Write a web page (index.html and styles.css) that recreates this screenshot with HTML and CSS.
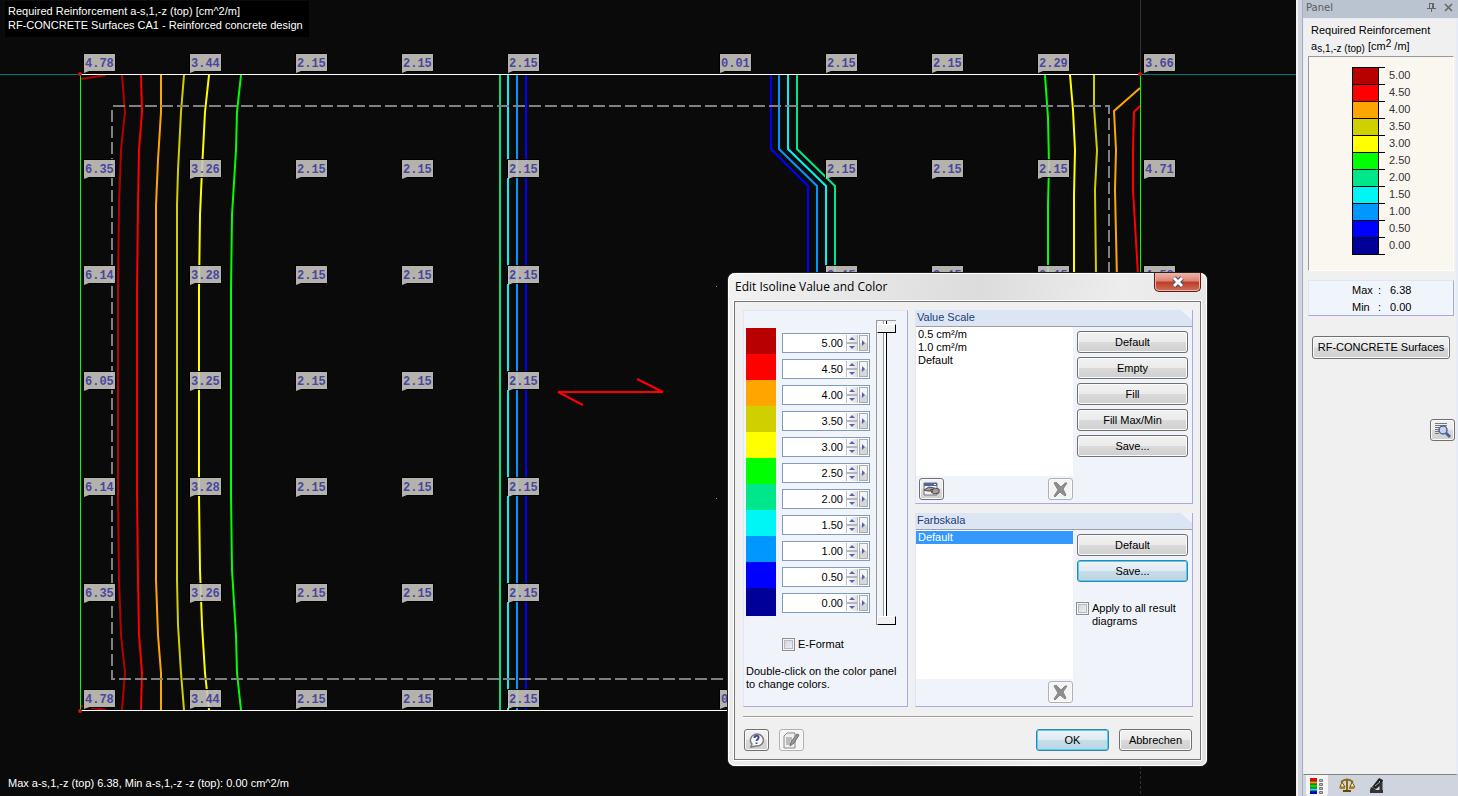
FILE: index.html
```html
<!DOCTYPE html>
<html lang="en">
<head>
    <meta charset="UTF-8">
    <meta name="viewport" content="width=device-width, initial-scale=1.0">
    <title>Required Reinforcement</title>
    <link rel="stylesheet" href="styles.css">
</head>
<body>
    <main class="workspace">
        <svg class="drawing" width="1600" height="1000" fill="none">
            <!-- axes -->
            <path stroke="#007878" d="M0 74.5H80M1141 74.5H1600"/>
            <path stroke="#333" d="M1140.5 0V74"/>
            <path stroke="#333" stroke-dasharray="3 2" d="M1140.5 711V1000"/>
            <!-- isolines, left side -->
            <g stroke-width="2">
                <path stroke="#b80000" d="M122 75L125 112 121 150 119 205 118 290V495L119 580 121 635 125 673 122 710M81 79L106 75M81 706L106 710"/>
                <path stroke="#f00" d="M141 75L142 112 139 150 138 205 137 290V495L138 580 139 635 142 673 141 710"/>
                <path stroke="#ffa500" d="M161 75V112L158 160 156 205 156 290V495L156 580 158 635 161 673V710"/>
                <path stroke="#d0d000" d="M184 75L181 112 178 170 177 205 177 290V495L177 580 178 625 181 673 184 710"/>
                <path stroke="#ff0" d="M209 75L205 112 202 170 200 215 199 290V495L200 570 202 625 205 673 209 710"/>
                <path stroke="#0f0" d="M241 75L237 112 236 150 232 215 231 290V495L232 570 236 635 237 673 241 710"/>
                <path stroke="#00e080" d="M500 75V710"/>
                <path stroke="#00f5f5" d="M508 75V710"/>
                <path stroke="#0098ff" d="M517 75V710"/>
                <path stroke="#00f" d="M526 75V710"/>
            </g>
            <!-- isolines, right side -->
            <g stroke-width="2">
                <path stroke="#00f" d="M771 75V149L808 186V710"/>
                <path stroke="#0098ff" d="M779 75V149L817 186V710"/>
                <path stroke="#00f5f5" d="M788 75V149L826 186V710"/>
                <path stroke="#00e68a" d="M797 75V149L835 186V710"/>
                <path stroke="#0f0" d="M1045 75L1048 118 1049 165 1048 205V580L1049 620 1048 667 1045 710"/>
                <path stroke="#ff0" d="M1070 75L1073 110 1075 150 1074 195V590L1075 635 1073 675 1070 710"/>
                <path stroke="#d0d000" d="M1094 75V107L1097 150 1095 190 1096 275V510L1095 595 1097 635 1094 678V710"/>
                <path stroke="#ffa500" d="M1140 88L1114 111 1116 150 1115 190 1117 280V505L1115 595 1116 635 1114 674 1140 697"/>
                <path stroke="#f00" d="M1140 106L1134 112 1133 150V190L1138 275V510L1133 595V635L1134 673 1140 679"/>
            </g>
            <path stroke="#808084" stroke-width="2" stroke-dasharray="12 4" d="M113 106H1109V679M112 110V679H1109"/>
            <!-- slab outline -->
            <path stroke="#fff" d="M80 74.5H1140M80 710.5H1140"/>
            <path stroke="#0f0" d="M80.5 75V710M1140.5 75V710"/>
            <g fill="#c81414">
                <circle cx="80" cy="74" r="2"/><circle cx="80" cy="711" r="2"/>
                <circle cx="1140" cy="74" r="2"/><circle cx="1140" cy="711" r="2"/>
            </g>
            <path stroke="#f00" stroke-width="2" d="M583 405L558 392H663L637 379"/>
            <path fill="#999" d="M716 286h1v1h-1zM716 498h1v1h-1z"/>
            <g id="labels"></g>
        </svg>
        <p class="caption">Required Reinforcement a-s,1,-z (top) [cm^2/m]<br>RF-CONCRETE Surfaces CA1 - Reinforced concrete design</p>
        <p class="status">Max a-s,1,-z (top) 6.38, Min a-s,1,-z -z (top): 0.00 cm^2/m</p>

        <section class="dialog" role="dialog" aria-labelledby="dialogTitle">
            <header class="titlebar">
                <h1 id="dialogTitle">Edit Isoline Value and Color</h1>
                <button type="button" class="close" aria-label="Close">
                    <svg width="14" height="12" viewBox="0 0 14 12"><path d="M3 2L11 10M11 2L3 10" stroke="#4a4f6a" stroke-width="5"/><path d="M3 2L11 10M11 2L3 10" stroke="#fff" stroke-width="3"/></svg>
                </button>
            </header>
            <form class="client">
                <div class="columns">
                    <div class="group values">
                        <div class="scale">
                            <div id="rows" class="rows"></div>
                            <div class="slider">
                                <input type="range" min="0" max="100" value="0" aria-label="Upper limit">
                                <input type="range" min="0" max="100" value="100" aria-label="Lower limit">
                            </div>
                        </div>
                        <label class="check eformat"><input type="checkbox">E-Format</label>
                        <p class="hint">Double-click on the color panel<br>to change colors.</p>
                    </div>

                    <div class="side">
                        <div class="group">
                            <h2>Value Scale</h2>
                            <div class="groupbody">
                                <div class="listcol">
                                    <select size="3" aria-label="Value Scale">
                                        <option>0.5 cm²/m</option>
                                        <option>1.0 cm²/m</option>
                                        <option>Default</option>
                                    </select>
                                    <div class="tools">
                                        <button type="button" class="icon" aria-label="Assign">
                                            <svg width="17" height="15" viewBox="0 0 17 15"><path d="M1 1h13v12H1z" fill="#eef0f6" stroke="#777"/><path d="M1 1h13v3H1z" fill="#50659c"/><path d="M11 2h2v1h-2z" fill="#fff"/><path d="M1 8l5-3 5 1 5 1v4l-5 1-3-2 2-1-5 0z" fill="#a89a98" stroke="#4d4d4d"/><path d="M7 8l4-1" stroke="#444"/></svg>
                                        </button>
                                        <button type="button" class="icon" disabled aria-label="Delete scale">
                                            <svg width="15" height="15" viewBox="0 0 15 15"><path d="M1 1l2-1 5 5 4-4 2 0-4 6 3 6-1 1-5-4-5 5-1-1 4-6z" fill="#8e8e8e" stroke="#858585"/></svg>
                                        </button>
                                    </div>
                                </div>
                                <div class="actions">
                                    <button type="button">Default</button>
                                    <button type="button">Empty</button>
                                    <button type="button">Fill</button>
                                    <button type="button">Fill Max/Min</button>
                                    <button type="button">Save...</button>
                                </div>
                            </div>
                        </div>
                        <div class="group">
                            <h2>Farbskala</h2>
                            <div class="groupbody">
                                <div class="listcol">
                                    <select size="3" aria-label="Farbskala">
                                        <option selected>Default</option>
                                    </select>
                                    <div class="tools">
                                        <span></span>
                                        <button type="button" class="icon" disabled aria-label="Delete colors">
                                            <svg width="15" height="15" viewBox="0 0 15 15"><path d="M1 1l2-1 5 5 4-4 2 0-4 6 3 6-1 1-5-4-5 5-1-1 4-6z" fill="#8e8e8e" stroke="#858585"/></svg>
                                        </button>
                                    </div>
                                </div>
                                <div class="actions">
                                    <button type="button">Default</button>
                                    <button type="button" class="hot">Save...</button>
                                    <label class="check apply"><input type="checkbox"><span>Apply to all result diagrams</span></label>
                                </div>
                            </div>
                        </div>
                    </div>
                </div>
                <footer class="buttons">
                    <button type="button" class="icon" aria-label="Help">
                        <svg width="17" height="17" viewBox="0 0 17 17"><path d="M3 15l1-3a6.500 6 0 1 1 4 2z" fill="#fafafa" stroke="#7c7c7c" stroke-width="1.500"/><path d="M6.500 6c0-3 5-3 4 0-.5 1.500-2 1.500-2 3M8.500 10.500v1.500" stroke="#3a4f96" stroke-width="2" fill="none"/></svg>
                    </button>
                    <button type="button" class="icon" disabled aria-label="Comment">
                        <svg width="17" height="17" viewBox="0 0 17 17"><path d="M1 4l3-3h8v15H1z" fill="#f0f0f0" stroke="#888"/><path d="M3 6h6M3 8h6M3 10h4M3 12h4" stroke="#888"/><path d="M14 2l-6 8-1 4 4-3 5-8z" fill="#999" stroke="#6c6c6c"/></svg>
                    </button>
                    <button type="button" class="hot ok">OK</button>
                    <button type="button">Abbrechen</button>
                </footer>
            </form>
        </section>
    </main>

    <aside class="panel">
        <header>
            <h2>Panel</h2>
            <button type="button" aria-label="Pin"><svg width="9" height="11" viewBox="0 0 9 11"><path d="M2.500 1v5M6.500 1v5M2 1.500h5M0 6.500h9M4.500 7v3M5.500 1v5" stroke="#666" fill="none"/></svg></button>
            <button type="button" aria-label="Close panel"><svg width="9" height="9" viewBox="0 0 9 9"><path d="M1 1l7 7M8 1L1 8" stroke="#666" stroke-width="1.500"/></svg></button>
        </header>
        <div class="panelbody">
            <h3>Required Reinforcement<br>a<small>s,1,-z (top)</small> [cm<sup>2</sup> /m]</h3>
            <ul id="legend" class="legend"></ul>
            <dl class="minmax">
                <dt>Max</dt><dd>:</dd><dd>6.38</dd>
                <dt>Min</dt><dd>:</dd><dd>0.00</dd>
            </dl>
            <button type="button" class="module">RF-CONCRETE Surfaces</button>
            <button type="button" class="icon find" aria-label="Details">
                <svg width="19" height="17" viewBox="0 0 19 17"><path d="M2 1.500h12M2 3.500h12M2 5.500h8M2 7.500h5M2 9.500h4M2 11.500h4" stroke="#777"/><circle cx="10" cy="8" r="4" fill="#c5d3ee" stroke="#50619a" stroke-width="1.500"/><path d="M13 11l4 4" stroke="#50619a" stroke-width="3"/></svg>
            </button>
        </div>
        <nav class="tabs">
            <button type="button" class="active" aria-label="Colors">
                <svg width="14" height="16" viewBox="0 0 14 16"><path fill="#f00" d="M0 0h7v3H0z"/><path fill="#f90" d="M0 3h7v3H0z"/><path fill="#0d0" d="M0 6h7v4H0z"/><path fill="#0ee" d="M0 10h7v3H0z"/><path fill="#00c" d="M0 13h7v3H0z"/><path d="M0 3h7M0 6h7M0 10h7M0 13h7" stroke="#333"/><path fill="#bbb" stroke="#777" d="M9.500 1.500h3v2h-3zM9.500 5.500h3v2h-3zM9.500 9.500h3v2h-3zM9.500 13.500h3v2h-3z"/></svg>
            </button>
            <button type="button" aria-label="Factors">
                <svg width="16" height="15" viewBox="0 0 16 15" fill="none"><path d="M8 1v11M2 4q6-5 12 0" stroke="#8a6a10" stroke-width="2"/><path d="M3 4L1 9h5zM13 4l-2 5h5z" fill="#f7edb0" stroke="#665520"/><path d="M0 9h6v2H1zM10 9h6l-1 2h-5z" fill="#a88414"/><path d="M4 12h8v2H4z" fill="#5b4a10"/></svg>
            </button>
            <button type="button" aria-label="Filter">
                <svg width="16" height="16" viewBox="0 0 16 16"><path d="M10 0l4 2-1 4-6 5-4-2z" fill="#222"/><path d="M10 3l1 1-5 4" stroke="#aaa" fill="none"/><path d="M12 5v7" stroke="#333" stroke-width="3" fill="none"/><path d="M1 12h13v3H1zM2 9l5 2-1 1H1z" fill="#333"/></svg>
            </button>
        </nav>
    </aside>

    <script>
        var scale = [
            ['5.00', '#b80000'], ['4.50', '#ff0000'], ['4.00', '#ffa500'], ['3.50', '#d0d000'],
            ['3.00', '#ffff00'], ['2.50', '#00ff00'], ['2.00', '#00e68a'], ['1.50', '#00f5f5'],
            ['1.00', '#0098ff'], ['0.50', '#0000ff'], ['0.00', '#000098']
        ];
        var rows = '';
        var legend = '';
        for (var i = 0; i < scale.length; i++) {
            rows += '<div class="row"><div class="swatch" style="background:' + scale[i][1] + '"></div>' +
                '<div class="spin"><input type="text" value="' + scale[i][0] + '" aria-label="Value ' + (i + 1) + '">' +
                '<span class="updown"><button type="button" class="up" aria-label="Up"></button>' +
                '<button type="button" class="down" aria-label="Down"></button></span>' +
                '<button type="button" class="more" aria-label="More"></button></div></div>';
            legend += '<li><i style="background:' + scale[i][1] + '"></i>' + scale[i][0] + '</li>';
        }
        document.getElementById('rows').innerHTML = rows;
        document.getElementById('legend').innerHTML = legend;

        // result values on the mesh grid, one line per column
        var step = 106;
        var results = {
            84: ['4.78', '6.35', '6.14', '6.05', '6.14', '6.35', '4.78'],
            190: ['3.44', '3.26', '3.28', '3.25', '3.28', '3.26', '3.44'],
            296: ['2.15', '2.15', '2.15', '2.15', '2.15', '2.15', '2.15'],
            402: ['2.15', '2.15', '2.15', '2.15', '2.15', '2.15', '2.15'],
            508: ['2.15', '2.15', '2.15', '2.15', '2.15', '2.15', '2.15'],
            720: ['0.01', '', '', '', '', '', '0.01'],
            826: ['2.15', '2.15', '2.15'],
            932: ['2.15', '2.15', '2.15'],
            1038: ['2.29', '2.15', '2.15'],
            1144: ['3.66', '4.71', '4.58']
        };
        var labels = '';
        for (var x in results) {
            for (var j = 0; j < results[x].length; j++) {
                if (!results[x][j]) continue;
                labels += '<g transform="translate(' + x + ' ' + (54 + j * step) + ')">' +
                    '<path class="flag" d="M0 0H31V17H5L0 19Z"/>' +
                    '<path class="edge" d="M-0.500 18V-0.500H31.500V17.500H5"/>' +
                    '<text x="1" y="13">' + results[x][j] + '</text></g>';
            }
        }
        document.getElementById('labels').innerHTML = labels;
    </script>
</body>
</html>
```
FILE: styles.css
```css
* {
    box-sizing: border-box;
}
body {
    margin: 0;
    height: 100vh;
    display: flex;
    overflow: hidden;
    font: 11px/13px "Liberation Sans", Arial, sans-serif;
    color: #000;
}
h1, h2, h3, p, ul, dl, dd {
    margin: 0;
    padding: 0;
    font-size: 11px;
    font-weight: normal;
}
button, input, select {
    font: inherit;
    color: inherit;
    margin: 0;
    padding: 0;
}
svg {
    display: block;
}

/* drawing area */
.workspace {
    position: relative;
    flex: 1;
    min-width: 0;
    display: flex;
    flex-direction: column;
    justify-content: space-between;
    overflow: hidden;
    background: #0a0a0a;
    color: #fff;
}
.drawing {
    position: absolute;
    left: 0;
    top: 0;
}
.flag {
    fill: #c8c4bc;
    fill-opacity: 0.9;
}
.edge {
    stroke: #000;
}
#labels text {
    font: bold 12px "Liberation Mono", monospace;
    fill: #4848a0;
}
.caption {
    position: relative;
    align-self: flex-start;
    margin: 1px 0 0 5px;
    padding: 3px 6px 5px 3px;
    line-height: 14px;
    background: #000;
}
.status {
    position: relative;
    padding: 0 8px 6px;
}

/* dialog window */
.dialog {
    position: absolute;
    left: 728px;
    top: 273px;
    width: 479px;
    padding: 0 6px 6px;
    border-radius: 7px;
    background: linear-gradient(100deg, #f2f2f2, #dcdcdc 45%, #ededed 70%, #e2e2e2);
    box-shadow: inset 0 0 0 1px #fff, 0 0 0 1px #222;
    color: #000;
}
.titlebar {
    display: flex;
    justify-content: space-between;
    align-items: flex-start;
    height: 28px;
}
.titlebar h1 {
    padding-left: 1px;
    font: 12px/28px "Open Sans", sans-serif;
}
.close {
    display: grid;
    place-items: center;
    width: 47px;
    height: 19px;
    border: 1px solid #571c14;
    border-top: 0;
    border-radius: 0 0 5px 5px;
    background: linear-gradient(#eeb5a8, #dc8272 45%, #bb3b25 50%, #d0705c);
    box-shadow: inset 0 0 0 1px #eab4a8;
}
.client {
    border: 1px solid #777;
    box-shadow: 0 0 0 1px #fff;
    padding: 8px 7px 8px 8px;
    background: #f0f0f0;
}
.columns {
    display: flex;
    gap: 7px;
}
.side {
    flex: 1;
    display: flex;
    flex-direction: column;
    gap: 9px;
}
.group {
    border: 1px solid #dce6f5;
    border-right-color: #a8a8e4;
    border-bottom-color: #a8a8e4;
    background: #f0f3fa;
}
.side .group {
    height: 194px;
    border-top: 0;
}
.values {
    width: 165px;
    padding: 9px 2px;
}
.scale {
    display: flex;
    gap: 6px;
}
.rows {
    padding-top: 8px;
}
.row {
    display: flex;
    gap: 6px;
    align-items: flex-start;
    height: 26px;
}
.swatch {
    width: 30px;
    height: 26px;
}
.row:last-child .swatch {
    height: 28px;
}
.spin {
    display: flex;
    gap: 1px;
    width: 88px;
    height: 20px;
    margin-top: 5px;
    padding: 1px;
    border: 1px solid #7f9db9;
    background: #fff;
}
.spin input {
    flex: 1;
    min-width: 0;
    border: 0;
    padding-right: 2px;
    background: none;
    text-align: right;
}
.updown {
    display: flex;
    flex-direction: column;
    gap: 2px;
    width: 12px;
    background: #b4b6c0;
}
.spin button {
    display: grid;
    place-items: center;
    border: 0;
    background: linear-gradient(90deg, #fff, #e0e0e4);
}
.updown button {
    flex: 1;
    border: solid #c0c2ca;
    border-width: 0 1px;
}
.spin .more {
    width: 9px;
    border: 1px solid #a8abb4;
    background: linear-gradient(#f4f4f4 50%, #d6d6d6 50%);
}
.up::before, .down::before, .more::before {
    content: "";
    border: solid transparent;
}
.up::before {
    border-width: 0 3px 3px;
    border-bottom-color: #5564b0;
}
.down::before {
    border-width: 3px 3px 0;
    border-top-color: #5564b0;
}
.more::before {
    border-width: 3px 0 3px 3px;
    border-left-color: #5564b0;
}
.slider {
    display: grid;
    width: 20px;
    height: 305px;
    border: solid #999;
    border-width: 1px 0 0 1px;
    background: linear-gradient(90deg, transparent 6px, #999 6px, #999 7px, #fff 7px, #fff 9px, #000 9px, #000 10px, transparent 10px);
}
.slider input {
    grid-area: 1 / 1;
    appearance: none;
    writing-mode: vertical-lr;
    width: 19px;
    height: 304px;
    background: none;
    pointer-events: none;
}
.slider input:first-child {
    height: 301px;
    align-self: end;
}
.slider input::-webkit-slider-thumb {
    appearance: none;
    width: 19px;
    height: 9px;
    border: solid #fff;
    border-width: 1px;
    border-right-color: #000;
    border-bottom-color: #000;
    background: #f0f0f0;
    pointer-events: auto;
}
.check {
    display: flex;
    gap: 3px;
    align-items: center;
}
.check input {
    appearance: none;
    flex: none;
    width: 13px;
    height: 13px;
    border: 1px solid #8e8f8f;
    background: linear-gradient(135deg, #cfd1d4, #f4f4f4);
    box-shadow: inset 0 0 0 1px #f4f4f4, inset 0 0 0 2px #b8bcc2;
}
.eformat {
    margin: 13px 0 14px 36px;
}
.apply {
    align-items: flex-start;
    margin: 16px 8px 0 -1px;
}
.side h2 {
    height: 17px;
    padding-left: 1px;
    line-height: 14px;
    color: #1c3c78;
    background: #dce5f4;
    border-bottom: 1px solid #a0a0a0;
    clip-path: polygon(0 0, calc(100% - 11px) 0, 100% 10px, 100% 100%, 0 100%);
}
.groupbody {
    display: flex;
    gap: 4px;
}
.listcol {
    width: 157px;
}
select {
    display: block;
    width: 157px;
    height: 149px;
    padding-top: 1px;
    overflow: hidden;
    border: 0;
    border-radius: 0;
    outline: 0;
    background: #fff;
}
option {
    min-height: 13px;
    padding: 0 2px;
    line-height: 13px;
}
option:checked {
    background: #3399ff linear-gradient(#3399ff, #3399ff);
    color: #fff;
}
.tools {
    display: flex;
    justify-content: space-between;
    padding: 2px 0 0 3px;
}
.actions {
    flex: 1;
    display: flex;
    flex-direction: column;
    gap: 4px;
    padding: 4px 4px 0 0;
}
.actions button, .buttons button, .module, .icon {
    height: 22px;
    border: 1px solid #707070;
    border-radius: 3px;
    background: linear-gradient(#f2f2f2, #ebebeb 48%, #dadada 52%, #cfcfcf);
    box-shadow: inset 0 0 0 1px #fafafa;
}
.actions .hot, .buttons .hot {
    border-color: #3c7fb1;
    background: linear-gradient(#eef4f8, #dfeaf1 48%, #c6dce8 52%, #bcd6e4);
    box-shadow: inset 0 0 0 1px #48d0f6;
}
.tools .icon, .buttons .icon, .find {
    display: grid;
    place-items: center;
    width: 25px;
}
.icon:disabled, .buttons .icon:disabled {
    border-color: #adb2b5;
    background: #f4f4f4;
}
.buttons {
    display: flex;
    gap: 10px;
    margin-top: 9px;
    padding: 12px 1px 0;
    border-top: 1px solid #a0a0a0;
    box-shadow: inset 0 1px 0 #fff;
}
.buttons button {
    width: 73px;
}
.buttons .ok {
    margin-left: auto;
}

/* control panel on the right */
.panel {
    flex: none;
    display: flex;
    flex-direction: column;
    width: 162px;
    padding-left: 5px;
    border-left: 2px solid #f4f4f4;
    background: linear-gradient(90deg, #d0d4de 4px, #a8aebc 4px, #a8aebc 5px, #d0d4de 5px);
}
.panel header {
    display: flex;
    align-items: center;
    gap: 8px;
    height: 18px;
    padding: 0 5px 3px 3px;
    background: #bac3d0;
}
.panel header h2 {
    flex: 1;
    font: 10px/14px "DejaVu Sans", sans-serif;
    color: #5c5c5c;
}
.panel header button {
    border: 0;
    background: none;
}
.panelbody {
    flex: 1;
    display: flex;
    flex-direction: column;
    padding: 3px 2px 0 4px;
    border: solid #e6ecf6;
    border-width: 1px 2px 0 1px;
    border-bottom: 1px solid #808080;
    background: #f0f0f0;
}
.panelbody h3 {
    height: 34px;
    padding-left: 3px;
    line-height: 16px;
    white-space: nowrap;
}
h3 small {
    font-size: 10px;
    vertical-align: -2px;
    line-height: 10px;
}
h3 sup {
    font-size: 10px;
    line-height: 8px;
    vertical-align: 3px;
}
.legend {
    height: 215px;
    padding: 10px 0 0 43px;
    border: 1px solid #fff;
    border-top-color: #999;
    border-left-color: #999;
    background: #faf7f0;
    list-style: none;
}
.legend li {
    display: flex;
    height: 17px;
    line-height: 17px;
    color: #333;
    background: linear-gradient(#000, #000) 0 0 / 33px 1px no-repeat;
}
.legend li:last-child {
    height: 18px;
    background: linear-gradient(#000, #000) 0 0 / 33px 1px no-repeat, linear-gradient(#000, #000) 0 100% / 33px 1px no-repeat;
}
.legend i {
    width: 27px;
    margin-right: 10px;
    border: 1px solid #000;
    border-bottom: 0;
}
.legend li:last-child i {
    border-bottom: 1px solid #000;
}
.minmax {
    display: grid;
    grid-template-columns: 26px 12px 1fr;
    height: 36px;
    margin: 9px 0 20px;
    padding: 1px 0 0 43px;
    line-height: 17px;
    border: 1px solid #dce6f5;
    border-right-color: #a8a8e4;
    border-bottom-color: #a8a8e4;
    background: #f0f4fb;
}
.module {
    height: 23px;
    margin: 0 4px;
    white-space: nowrap;
}
.find {
    align-self: flex-end;
    margin: 60px -1px 0 0;
}
.tabs {
    display: flex;
    gap: 8px;
    height: 21px;
    padding-left: 3px;
}
.tabs button {
    display: grid;
    place-items: center;
    width: 22px;
    border: 0;
    background: none;
}
.tabs .active {
    background: #f4f4f4;
    border-radius: 0 0 3px 3px;
}
```
